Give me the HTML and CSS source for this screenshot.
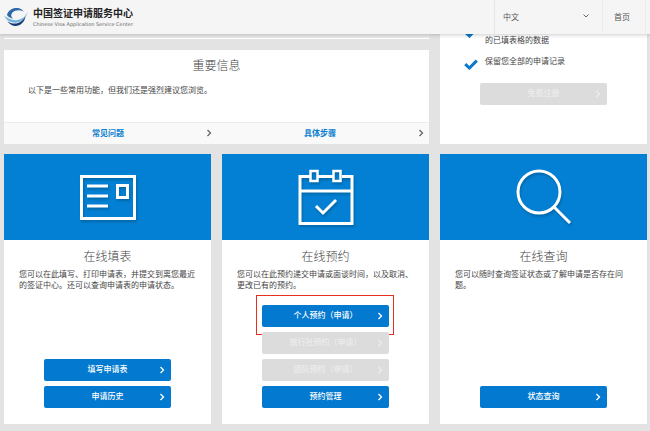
FILE: index.html
```html
<!DOCTYPE html>
<html lang="zh-CN">
	<head>
		<meta charset="UTF-8" />
		<meta name="viewport" content="width=device-width, initial-scale=1.0" />
		<title>中国签证申请服务中心</title>
		<link rel="stylesheet" href="styles.css">
	</head>
	<body>
		<svg width="0" height="0" class="sprite" aria-hidden="true">
			<symbol id="arrow" viewBox="0 0 6 8">
				<path d="M1.5 1 4.5 4 1.5 7" fill="none" stroke="currentColor" stroke-width="1.3" />
			</symbol>
			<symbol id="tick" viewBox="0 0 14 11">
				<path d="M1.2 5.2 5.4 9 12.8 1.6" fill="none" stroke="currentColor" stroke-width="3" />
			</symbol>
		</svg>

		<header class="header">
			<a class="brand" href="#">
				<svg class="brand-logo" viewBox="0 0 24 20" aria-hidden="true">
					<path d="M3 8C4 3 9 .3 14 1c2.500.4 4.500 1.700 5.700 3.400C16 2.500 11 2.800 8.500 5.500 6.500 7.700 7.200 10 9 11.400 6 11 4 10 3 8z" fill="#2e69a8" />
					<path d="M23.600 4.800C21.500 10 17 13.200 11.800 13.200 7 13.200 3 11 .3 8.800 2.500 13.500 7 16 11.800 15.700 17.500 15.300 22.300 11 23.600 4.800z" fill="#71b5dc" />
					<path d="M21.500 9.500C20.500 15.500 16 19.200 11 18.900 7.500 18.700 4.700 16.600 3.300 14 6.500 16.600 10.500 17.200 14 16 17.300 14.800 19.800 12.500 21.500 9.500z" fill="#173b78" />
				</svg>
				<span class="brand-text">
					<span class="brand-name">中国签证申请服务中心</span>
					<span class="brand-sub">Chinese Visa Application Service Center</span>
				</span>
			</a>
			<div class="language">
				<select class="language-select" aria-label="语言">
					<option>中文</option>
				</select>
				<svg class="language-arrow" viewBox="0 0 8 6" aria-hidden="true">
					<path d="M1.500 1.500 4 4 6.500 1.500" fill="none" stroke="currentColor" />
				</svg>
			</div>
			<a class="home" href="#">首页</a>
		</header>

		<main class="page">
			<div class="top-left">
				<div class="banner"></div>
				<section class="card info">
					<h2 class="title">重要信息</h2>
					<p class="info-text">以下是一些常用功能，但我们还是强烈建议您浏览。</p>
					<nav class="info-links">
						<a class="info-link" href="#">常见问题<svg class="arrow"><use href="#arrow" /></svg></a>
						<a class="info-link" href="#">具体步骤<svg class="arrow"><use href="#arrow" /></svg></a>
					</nav>
				</section>
			</div>

			<section class="card account">
				<ul class="benefits">
					<li class="benefit"><svg class="tick"><use href="#tick" /></svg><span><br />的已填表格的数据</span></li>
					<li class="benefit"><svg class="tick"><use href="#tick" /></svg>保留您全部的申请记录</li>
				</ul>
				<button type="button" class="btn" disabled>免费注册<svg class="arrow"><use href="#arrow" /></svg></button>
			</section>

			<section class="card service">
				<div class="hero">
					<svg class="hero-icon" viewBox="0 0 60 60" fill="none" stroke="#fff" aria-hidden="true">
						<path d="M3.500 9.500h53v42h-53z" stroke-width="3" />
						<path d="M9 19h21M9 29h21M9 39h21" stroke-width="3" />
						<path d="M39.500 18.500h10v12h-10z" stroke-width="3" />
					</svg>
				</div>
				<h2 class="title">在线填表</h2>
				<p class="desc">您可以在此填写、打印申请表，并提交到离您最近的签证中心。还可以查询申请表的申请状态。</p>
				<div class="actions">
					<button type="button" class="btn">填写申请表<svg class="arrow"><use href="#arrow" /></svg></button>
					<button type="button" class="btn">申请历史<svg class="arrow"><use href="#arrow" /></svg></button>
				</div>
			</section>

			<section class="card service">
				<div class="hero">
					<svg class="hero-icon" viewBox="0 0 60 60" fill="none" stroke="#fff" aria-hidden="true">
						<path d="M14 9.500H4v47h52v-47H46M22 9.500h15M4 24h52" stroke-width="3" />
						<path d="M14.500 4h7v10h-7zM37.500 4h7v10h-7z" stroke-width="2.500" />
						<path d="M20 39l7 7 13-13" stroke-width="3" />
					</svg>
				</div>
				<h2 class="title">在线预约</h2>
				<p class="desc">您可以在此预约递交申请或面谈时间，以及取消、更改已有的预约。</p>
				<div class="actions">
					<button type="button" class="btn marked">个人预约（申请）<svg class="arrow"><use href="#arrow" /></svg></button>
					<button type="button" class="btn" disabled>旅行社预约（申请）<svg class="arrow"><use href="#arrow" /></svg></button>
					<button type="button" class="btn" disabled>团队预约（申请）<svg class="arrow"><use href="#arrow" /></svg></button>
					<button type="button" class="btn">预约管理<svg class="arrow"><use href="#arrow" /></svg></button>
				</div>
			</section>

			<section class="card service">
				<div class="hero">
					<svg class="hero-icon" viewBox="0 0 60 60" fill="none" stroke="#fff" stroke-width="3" aria-hidden="true">
						<circle cx="25" cy="25" r="21" />
						<path d="M40 40l16 16" />
					</svg>
				</div>
				<h2 class="title">在线查询</h2>
				<p class="desc">您可以随时查询签证状态或了解申请是否存在问题。</p>
				<div class="actions">
					<button type="button" class="btn">状态查询<svg class="arrow"><use href="#arrow" /></svg></button>
				</div>
			</section>
		</main>
	</body>
</html>
```

FILE: styles.css
```css
* {
	box-sizing: border-box;
}
body {
	margin: 0;
	background-color: #e3e3e3;
	color: #444;
	font-family: 'Liberation Sans', 'Noto Sans CJK SC', sans-serif;
	font-size: 8px;
	line-height: 11px;
}
h2,
p,
ul {
	margin: 0;
	padding: 0;
}
a {
	color: inherit;
	text-decoration: none;
}
.sprite {
	position: absolute;
}

/* header */
.header {
	position: sticky;
	top: 0;
	z-index: 1;
	display: flex;
	height: 34px;
	padding-right: 4px;
	background-color: #f5f5f5;
	box-shadow: 0 1px 4px rgba(0, 0, 0, 0.2);
}
.brand {
	display: flex;
	align-items: center;
	gap: 5px;
	margin-right: auto;
	padding-left: 4px;
}
.brand-logo {
	width: 24px;
	height: 20px;
}
.brand-text {
	display: flex;
	flex-direction: column;
}
.brand-name {
	color: #222;
	font-size: 10px;
	font-weight: bold;
	line-height: 13px;
}
.brand-sub {
	color: #666;
	font-family: 'DejaVu Sans', sans-serif;
	font-size: 5px;
	line-height: 8px;
}
.language {
	position: relative;
	width: 108px;
	border-left: 1px solid #e6e6e6;
}
.language-select {
	width: 100%;
	height: 100%;
	padding: 0 8px;
	border: 0;
	background: none;
	color: #555;
	font: inherit;
	appearance: none;
}
.language-arrow {
	position: absolute;
	top: 13px;
	right: 12px;
	width: 8px;
	height: 6px;
	color: #666;
	pointer-events: none;
}
.home {
	display: flex;
	align-items: center;
	justify-content: center;
	width: 44px;
	padding-right: 4px;
	border: 1px solid #ececec;
	border-width: 0 1px;
	color: #555;
}

/* cards */
.page {
	display: grid;
	grid-template-columns: repeat(3, 1fr);
	gap: 10px 11px;
	padding: 0 3px 7px 4px;
}
.card {
	display: flex;
	flex-direction: column;
	background-color: #fff;
}
.title {
	color: #444;
	font-size: 12px;
	font-weight: 300;
	line-height: 16px;
	text-align: center;
}
.top-left {
	display: flex;
	flex-direction: column;
	grid-column: span 2;
	gap: 11px;
}
.banner {
	height: 5px;
	border-bottom: 1px solid #fff;
	background-color: #e9e9e9;
}
.info {
	padding-top: 8px;
}
.info-text {
	padding: 11px 24px 26px;
}
.info-links {
	display: grid;
	grid-template-columns: 1fr 1fr;
	gap: 5px;
	padding: 0 3px;
	border-top: 1px solid #ececec;
	background-color: #f9f9f9;
}
.info-link {
	position: relative;
	padding-right: 5px;
	color: #0b80d0;
	font-weight: bold;
	line-height: 21px;
	text-align: center;
}
.info-link .arrow {
	top: 6px;
	right: 2px;
	color: #666;
}
.arrow {
	position: absolute;
	width: 6px;
	height: 8px;
}

/* account */
.account {
	align-items: center;
	padding: 0 24px;
}
/* the list is scrolled partly under the header */
.benefits {
	display: flex;
	flex-direction: column;
	align-self: stretch;
	gap: 10px;
	margin: -10px 0 13px;
	list-style: none;
}
.benefit {
	display: flex;
	gap: 7px;
}
.tick {
	width: 14px;
	height: 11px;
	margin-top: 3px;
	color: #0b78c8;
}

/* services */
.service {
	min-height: 270px;
	padding-bottom: 16px;
}
.hero {
	display: flex;
	align-items: center;
	justify-content: center;
	height: 86px;
	margin-bottom: 9px;
	background-color: #0380d3;
}
.hero-icon {
	width: 60px;
	height: 60px;
	filter: drop-shadow(1px 2px 1px rgba(0, 0, 0, 0.2));
}
.desc {
	padding: 4px 14px 0 15px;
}
.actions {
	display: flex;
	flex-direction: column;
	align-items: center;
	gap: 5px;
	margin-top: auto;
}
.btn {
	position: relative;
	width: 127px;
	height: 22px;
	padding: 0;
	border: 0;
	border-radius: 2px;
	background-color: #0379cf;
	color: #fff;
	font: inherit;
	font-weight: 500;
	line-height: 22px;
	cursor: pointer;
}
.btn .arrow {
	top: 7px;
	right: 6px;
}
.btn:disabled {
	background-color: #dcdcdc;
	color: #ececec;
	cursor: default;
}
.marked::after {
	content: '';
	position: absolute;
	inset: -10px -5px -8px -6px;
	border: 1px solid #e8301f;
}
```
